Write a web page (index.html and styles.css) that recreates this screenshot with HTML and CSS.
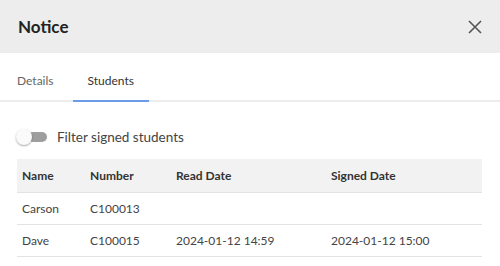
FILE: index.html
```html
<!DOCTYPE html>
<html lang="en">
<head>
    <meta charset="UTF-8">
    <title>Notice</title>
    <link rel="stylesheet" href="styles.css">
</head>
<body>
    <div class="dialog">
        <div class="dialog-header">
            <h2>Notice</h2>
            <button class="close-button" aria-label="Close">
                <svg width="14" height="14" viewBox="0 0 14 14"><path d="M1 1L13 13M13 1L1 13" stroke="#555" stroke-width="1.6" fill="none"/></svg>
            </button>
        </div>
        <div class="tabs">
            <div class="tab">Details</div>
            <div class="tab active">Students</div>
        </div>
        <div class="dialog-body">
            <label class="toggle-row">
                <span class="toggle"><span class="toggle-knob"></span></span>
                Filter signed students
            </label>
            <table class="students">
                <thead>
                    <tr>
                        <th class="col-name">Name</th>
                        <th class="col-number">Number</th>
                        <th class="col-read">Read Date</th>
                        <th>Signed Date</th>
                    </tr>
                </thead>
                <tbody>
                    <tr>
                        <td>Carson</td>
                        <td>C100013</td>
                        <td></td>
                        <td></td>
                    </tr>
                    <tr>
                        <td>Dave</td>
                        <td>C100015</td>
                        <td>2024-01-12 14:59</td>
                        <td>2024-01-12 15:00</td>
                    </tr>
                </tbody>
            </table>
        </div>
    </div>
</body>
</html>
```
FILE: styles.css
```css
body {
    margin: 0;
    padding: 0;
    background-color: #fff;
    font-family: Lato, "Noto Sans", sans-serif;
    color: #333;
}
.dialog {
    width: 500px;
}
.dialog-header {
    display: flex;
    justify-content: space-between;
    align-items: center;
    height: 53px;
    padding: 0 12px 0 18px;
    background-color: #ededed;
}
.dialog-header h2 {
    margin: 0;
    font-size: 17px;
    font-weight: bold;
    color: #222;
}
.close-button {
    display: flex;
    align-items: center;
    justify-content: center;
    width: 26px;
    height: 26px;
    padding: 0;
    border: none;
    background: none;
    cursor: pointer;
}
.tabs {
    display: flex;
    gap: 4px;
    padding-left: 2px;
    border-bottom: 2px solid #ececec;
}
.tab {
    padding: 20px 15px 12px;
    font-size: 12px;
    color: #666;
    margin-bottom: -2px;
    border-bottom: 2px solid transparent;
}
.tab.active {
    color: #333;
    border-bottom-color: #6b9be8;
}
.dialog-body {
    padding: 27px 18px 0 17px;
}
.toggle-row {
    display: flex;
    align-items: center;
    gap: 10px;
    font-size: 13.5px;
    color: #444;
    margin-left: -1px;
}
.toggle {
    position: relative;
    display: inline-block;
    width: 31px;
    height: 16px;
}
.toggle::before {
    content: "";
    position: absolute;
    left: 12px;
    right: 0;
    top: 3px;
    height: 10px;
    border-radius: 5px;
    background-color: #9e9e9e;
}
.toggle-knob {
    position: absolute;
    left: 0;
    top: 0;
    width: 16px;
    height: 16px;
    border-radius: 50%;
    background-color: #fafafa;
    box-shadow: 0 1px 2px rgba(0, 0, 0, 0.35);
}
.students {
    width: 100%;
    margin-top: 14px;
    border-collapse: collapse;
    font-size: 12px;
}
.students th {
    background-color: #f2f2f2;
    text-align: left;
    font-weight: bold;
    color: #333;
    height: 33px;
    padding: 0 5px;
    border-bottom: 1px solid #e3e3e3;
}
.students td {
    height: 31px;
    padding: 0 5px;
    color: #444;
    border-bottom: 1px solid #e3e3e3;
}
.col-name {
    width: 58px;
}
.col-number {
    width: 76px;
}
.col-read {
    width: 145px;
}
```
